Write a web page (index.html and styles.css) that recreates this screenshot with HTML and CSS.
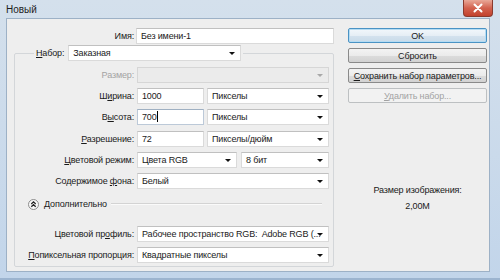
FILE: index.html
```html
<!DOCTYPE html>
<html lang="ru">
  <head>
    <meta charset="UTF-8" />
    <title>Новый</title>
    <link rel="stylesheet" href="styles.css">
  </head>
  <body>
    <div class="window">
      <div class="titlebar">
        <span class="title">Новый</span>
        <div class="close">
          <svg width="12" height="10" viewBox="0 0 12 10">
            <path d="M2.5 1.5 L9.5 8.5 M9.5 1.5 L2.5 8.5" stroke="#fff" stroke-width="2" stroke-linecap="round" />
          </svg>
        </div>
      </div>

      <div class="client">
        <div class="left">
          <div class="name-row">
            <span class="lbl">Имя:</span>
            <div class="field">Без имени-1</div>
          </div>

          <fieldset class="preset">
            <legend>
              <span class="lbl"><u>Н</u>абор:</span>
              <div class="combo preset-combo">Заказная</div>
            </legend>

            <div class="rows">
              <span class="lbl disabled">Размер:</span>
              <div class="combo disabled"></div>

              <span class="lbl">Ш<u>и</u>рина:</span>
              <div class="pair">
                <div class="field">1000</div>
                <div class="combo">Пикселы</div>
              </div>

              <span class="lbl">В<u>ы</u>сота:</span>
              <div class="pair">
                <div class="field focused">700<span class="caret"></span></div>
                <div class="combo">Пикселы</div>
              </div>

              <span class="lbl"><u>Р</u>азрешение:</span>
              <div class="pair">
                <div class="field">72</div>
                <div class="combo">Пикселы/дюйм</div>
              </div>

              <span class="lbl"><u>Ц</u>ветовой режим:</span>
              <div class="pair mode">
                <div class="combo">Цвета RGB</div>
                <div class="combo">8 бит</div>
              </div>

              <span class="lbl">Содержимое <u>ф</u>она:</span>
              <div class="combo">Белый</div>
            </div>

            <div class="advanced">
              <span class="adv-icon">
                <svg width="11" height="11" viewBox="0 0 11 11">
                  <circle cx="5.5" cy="5.5" r="5" fill="#f7f7f7" stroke="#8c8c8c" />
                  <path d="M3.3 5 L5.5 2.9 L7.7 5 M3.3 7.8 L5.5 5.7 L7.7 7.8" fill="none" stroke="#222" stroke-width="1.2" />
                </svg>
              </span>
              <span class="adv-text">Дополнительно</span>
              <span class="adv-line"></span>
            </div>

            <div class="rows">
              <span class="lbl">Цветовой пр<u>о</u>филь:</span>
              <div class="combo">Рабочее пространство RGB:&nbsp; Adobe RGB (...</div>

              <span class="lbl"><u>П</u>опиксельная пропорция:</span>
              <div class="combo">Квадратные пикселы</div>
            </div>
          </fieldset>
        </div>

        <div class="right">
          <button class="btn default">OK</button>
          <button class="btn">Сбросить</button>
          <button class="btn"><u>С</u>охранить набор параметров...</button>
          <button class="btn" disabled><u>У</u>далить набор...</button>

          <div class="size-info">
            <div>Размер изображения:</div>
            <div>2,00M</div>
          </div>
        </div>
      </div>
    </div>
  </body>
</html>
```

FILE: styles.css
```css
body {
  margin: 0;
  font-family: "Liberation Sans", Arial, sans-serif;
  font-size: 9px;
  letter-spacing: -0.15px;
  color: #1a1a1a;
}

.window {
  width: 500px;
  height: 280px;
  display: flex;
  flex-direction: column;
  background: linear-gradient(#d4e0ec, #c2d5ea);
  box-sizing: border-box;
  border-bottom: 2px solid #9cb4cf;
}

.titlebar {
  height: 18px;
  display: flex;
  justify-content: space-between;
  align-items: flex-start;
  padding-left: 6px;
  flex-shrink: 0;
}

.title {
  font-size: 10px;
  line-height: 19px;
  letter-spacing: 0;
  color: #1e1e1e;
}

.close {
  width: 30px;
  height: 17px;
  margin-right: 7px;
  display: flex;
  align-items: center;
  justify-content: center;
  background: linear-gradient(#e9a898, #d3624f 50%, #c2412d);
  border: 1px solid #8a3a2e;
  border-top: none;
  border-radius: 0 0 4px 4px;
  box-sizing: border-box;
}

.client {
  flex: 1;
  margin: 0 10px 6px 6px;
  background: #eeeeee;
  border: 1px solid #9db1c6;
  display: flex;
  gap: 14px;
  padding: 9px 2px 0 0;
}

.lbl {
  text-align: right;
  white-space: nowrap;
  line-height: 16px;
}

.lbl u,
.btn u {
  text-decoration-thickness: 1px;
  text-underline-offset: 1px;
}

.lbl.disabled {
  color: #a3a3a3;
}

.field,
.combo {
  height: 16px;
  line-height: 14px;
  box-sizing: border-box;
  background: #fff;
  border: 1px solid #dadada;
  border-top-color: #c0c0c0;
  padding-left: 4px;
  white-space: nowrap;
  overflow: hidden;
}

.combo {
  position: relative;
  padding-right: 13px;
}

.combo::after {
  content: "";
  position: absolute;
  right: 5px;
  top: 6px;
  border-left: 3px solid transparent;
  border-right: 3px solid transparent;
  border-top: 3px solid #111;
}

.combo.disabled {
  background: #ebebeb;
  border-color: #d6d6d6;
}

.combo.disabled::after {
  border-top-color: #a8a8a8;
}

.field.focused {
  border-color: #bcc9d8;
  border-top-color: #9fb0c2;
}

.caret {
  display: inline-block;
  width: 1px;
  height: 11px;
  background: #000;
  vertical-align: -2px;
}

.left {
  width: 326px;
  padding-left: 1px;
}

.name-row {
  display: grid;
  grid-template-columns: 126px 198px;
  column-gap: 2px;
}

.preset {
  margin: 1px 0 0 6px;
  width: 320px;
  box-sizing: border-box;
  padding: 6px 4px 3px 0;
  border: 1px solid #d3d6d9;
  border-radius: 2px;
}

.preset legend {
  display: flex;
  align-items: center;
  gap: 4px;
  margin-left: 19px;
  padding: 0 2px;
}

.preset-combo {
  width: 173px;
}

.rows {
  display: grid;
  grid-template-columns: 119px 192px;
  grid-auto-rows: 16px;
  column-gap: 3px;
  row-gap: 5.2px;
}

.pair {
  display: grid;
  grid-template-columns: 67px 122px;
  column-gap: 3px;
}

.pair.mode {
  grid-template-columns: 100px 88px;
  column-gap: 4px;
}

.advanced {
  display: flex;
  align-items: center;
  height: 11px;
  margin: 10px 7px 16px 13px;
}

.adv-icon {
  display: flex;
  width: 11px;
  height: 11px;
}

.adv-text {
  margin-left: 5px;
  line-height: 11px;
}

.adv-line {
  flex: 1;
  margin-left: 4px;
  border-top: 1px solid #d3d3d3;
  border-bottom: 1px solid #fafafa;
}

.right {
  width: 140px;
  display: flex;
  flex-direction: column;
  gap: 5px;
}

.btn {
  height: 15px;
  padding: 0;
  font-family: inherit;
  font-size: 9px;
  letter-spacing: -0.15px;
  white-space: nowrap;
  color: #1a1a1a;
  border: 1px solid #8a8a8a;
  border-radius: 2px;
  background: linear-gradient(#f3f3f3, #ebebeb 50%, #dcdcdc 51%, #d2d2d2);
}

.btn.default {
  border-color: #4a93c4;
  background: linear-gradient(#f2f7fb, #e6eef5 50%, #d4e2ee 51%, #c9dbe9);
  box-shadow: inset 0 0 0 1px #b5dcf3;
}

.btn:disabled {
  color: #a2a2a2;
  border-color: #bdc0c2;
  background: #f2f2f2;
}

.size-info {
  margin-top: 74px;
  text-align: center;
  line-height: 16px;
}
```
